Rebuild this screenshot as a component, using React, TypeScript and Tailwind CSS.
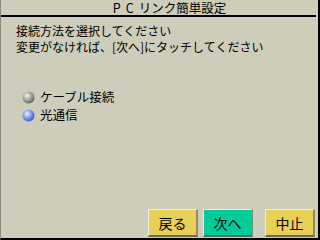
import React from "react";

function Ball({ color }: { color: "gray" | "blue" }) {
  const id = color === "gray" ? "gg" : "bb";
  const stops =
    color === "gray"
      ? ["#f4f4f0", "#a8a8a0", "#5c5c58"]
      : ["#f0f4ff", "#7e9cf0", "#3a50c8"];
  return (
    <svg width="13" height="13" viewBox="0 0 13 13">
      <defs>
        <radialGradient id={id} cx="0.38" cy="0.35" r="0.7">
          <stop offset="0" stopColor={stops[0]} />
          <stop offset="0.5" stopColor={stops[1]} />
          <stop offset="1" stopColor={stops[2]} />
        </radialGradient>
      </defs>
      <circle cx="6.5" cy="6.5" r="6" fill={`url(#${id})`} />
    </svg>
  );
}

function Btn({ label, green }: { label: string; green?: boolean }) {
  return (
    <div
      className={`w-[50px] h-[28px] flex items-center justify-center text-[14px] leading-[16px] text-black border-t border-l border-t-[#f4f0d8] border-l-[#f4f0d8] border-b-2 border-r-2 border-b-[#6a6a5a] border-r-[#8a8a78] ${
        green ? "bg-[#00cc99]" : "bg-[#e8cf58]"
      }`}
    >
      {label}
    </div>
  );
}

export default function App() {
  return (
    <div
      className="w-[320px] h-[240px] bg-[#cdcdb9] flex flex-col border-l border-l-[#8a8a80] border-r-2 border-r-black border-b-2 border-b-black overflow-hidden"
      style={{ fontFamily: '"Noto Sans CJK JP", sans-serif' }}
    >
      <div className="h-[17px] mr-[2px] pl-[22px] border-b-2 border-b-black flex items-center justify-center text-[12.5px] leading-[15px] text-black">
        <span className="tracking-[5px]">PC</span>
        <span>リンク簡単設定</span>
      </div>
      <div className="pl-[15px] pt-[6px] text-[12px] leading-[16px] text-black">
        <div>接続方法を選択してください</div>
        <div>変更がなければ、[次へ]にタッチしてください</div>
      </div>
      <div className="pl-[21px] pt-[35px] flex flex-col gap-[4px] text-[12.5px] leading-[14px] text-black">
        <div className="flex items-center gap-[5px]">
          <Ball color="gray" />
          <span>ケーブル接続</span>
        </div>
        <div className="flex items-center gap-[5px]">
          <Ball color="blue" />
          <span>光通信</span>
        </div>
      </div>
      <div className="flex-1" />
      <div className="flex justify-end pr-[3px] pb-[1px]">
        <Btn label="戻る" />
        <div className="w-[5px]" />
        <Btn label="次へ" green />
        <div className="w-[12px]" />
        <Btn label="中止" />
      </div>
    </div>
  );
}
